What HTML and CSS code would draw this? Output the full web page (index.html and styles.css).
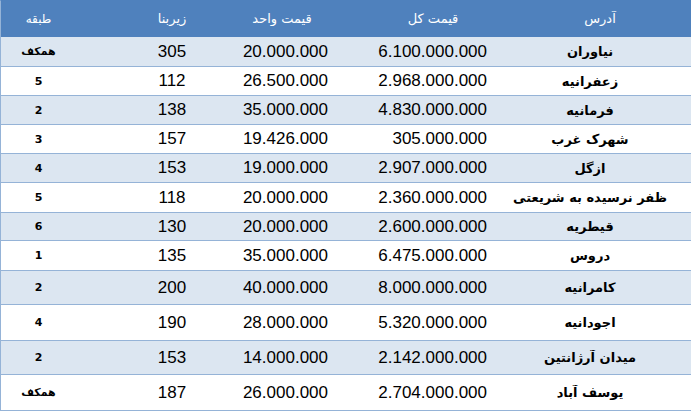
FILE: index.html
```html
<!DOCTYPE html>
<html lang="fa">
<head>
<meta charset="utf-8">
<title>جدول قیمت</title>
<link rel="stylesheet" href="styles.css">
</head>
<body>
<div class="table">
  <div class="row head">
    <div class="c addr">آدرس</div>
    <div class="c total">قیمت کل</div>
    <div class="c unit">قیمت واحد</div>
    <div class="c area">زیربنا</div>
    <div class="c floor">طبقه</div>
  </div>
  <div class="row alt"><div class="c addr">نیاوران</div><div class="c total num">6.100.000.000</div><div class="c unit num">20.000.000</div><div class="c area num">305</div><div class="c floor">همکف</div></div>
  <div class="row"><div class="c addr">زعفرانیه</div><div class="c total num">2.968.000.000</div><div class="c unit num">26.500.000</div><div class="c area num">112</div><div class="c floor">5</div></div>
  <div class="row alt"><div class="c addr">فرمانیه</div><div class="c total num">4.830.000.000</div><div class="c unit num">35.000.000</div><div class="c area num">138</div><div class="c floor">2</div></div>
  <div class="row"><div class="c addr">شهرک غرب</div><div class="c total num">305.000.000</div><div class="c unit num">19.426.000</div><div class="c area num">157</div><div class="c floor">3</div></div>
  <div class="row alt"><div class="c addr">ازگل</div><div class="c total num">2.907.000.000</div><div class="c unit num">19.000.000</div><div class="c area num">153</div><div class="c floor">4</div></div>
  <div class="row"><div class="c addr">ظفر نرسیده به شریعتی</div><div class="c total num">2.360.000.000</div><div class="c unit num">20.000.000</div><div class="c area num">118</div><div class="c floor">5</div></div>
  <div class="row alt"><div class="c addr">قیطریه</div><div class="c total num">2.600.000.000</div><div class="c unit num">20.000.000</div><div class="c area num">130</div><div class="c floor">6</div></div>
  <div class="row"><div class="c addr">دروس</div><div class="c total num">6.475.000.000</div><div class="c unit num">35.000.000</div><div class="c area num">135</div><div class="c floor">1</div></div>
  <div class="row alt"><div class="c addr">کامرانیه</div><div class="c total num">8.000.000.000</div><div class="c unit num">40.000.000</div><div class="c area num">200</div><div class="c floor">2</div></div>
  <div class="row"><div class="c addr">اجودانیه</div><div class="c total num">5.320.000.000</div><div class="c unit num">28.000.000</div><div class="c area num">190</div><div class="c floor">4</div></div>
  <div class="row alt"><div class="c addr">میدان آرژانتین</div><div class="c total num">2.142.000.000</div><div class="c unit num">14.000.000</div><div class="c area num">153</div><div class="c floor">2</div></div>
  <div class="row"><div class="c addr">یوسف آباد</div><div class="c total num">2.704.000.000</div><div class="c unit num">26.000.000</div><div class="c area num">187</div><div class="c floor">همکف</div></div>
</div>
</body>
</html>
```
FILE: styles.css
```css
html, body {
  margin: 0;
  padding: 0;
  background: #ffffff;
}

.table {
  width: 691px;
  display: flex;
  flex-direction: column;
  border-top: 1px solid #4f81bd;
  border-left: 1px solid #95b3d7;
  box-sizing: border-box;
  direction: rtl;
}

.row {
  display: grid;
  grid-template-columns: 198px 157px 100px 160px 75px;
  align-items: center;
  height: 29px;
  border-bottom: 1px solid #95b3d7;
  box-sizing: border-box;
  background: #ffffff;
  font-family: "DejaVu Sans", "Noto Sans", sans-serif;
  font-weight: bold;
  font-size: 12px;
  color: #000000;
}

.row.alt {
  background: #dce6f1;
}

.row.head {
  height: 36px;
  background: #4f81bd;
  color: #ffffff;
  font-weight: normal;
  font-size: 13px;
  border-bottom: 1px solid #4f81bd;
}

.row:nth-child(2) { height: 30px; }
.row:nth-child(7) { height: 30px; }
.row:nth-child(8) { height: 28px; }
.row:nth-child(9) { height: 30px; }
.row:nth-child(10) { height: 34px; }
.row:nth-child(11) { height: 36px; }
.row:nth-child(12) { height: 34px; }
.row:nth-child(13) { height: 36px; }

.c {
  white-space: nowrap;
  overflow: hidden;
}

.addr {
  text-align: center;
  padding-right: 4px;
  font-size: 13px;
}

.head .addr {
  padding-right: 0;
  padding-left: 16px;
  font-size: 13px;
}

.total {
  text-align: center;
  padding-left: 37px;
}

.unit {
  text-align: center;
  padding-right: 8px;
}

.area {
  text-align: center;
  padding-left: 32px;
}

.floor {
  text-align: center;
  font-size: 11px;
}

.head .floor {
  font-size: 12px;
}

.num {
  font-family: "Liberation Sans", Arial, sans-serif;
  font-weight: normal;
  font-size: 17px;
  direction: ltr;
  color: #000000;
}

.total.num {
  text-align: right;
  padding-left: 0;
  padding-right: 6px;
}

.unit.num {
  text-align: right;
  padding-right: 8px;
}

.area.num {
  text-align: center;
  padding-left: 32px;
}
```
